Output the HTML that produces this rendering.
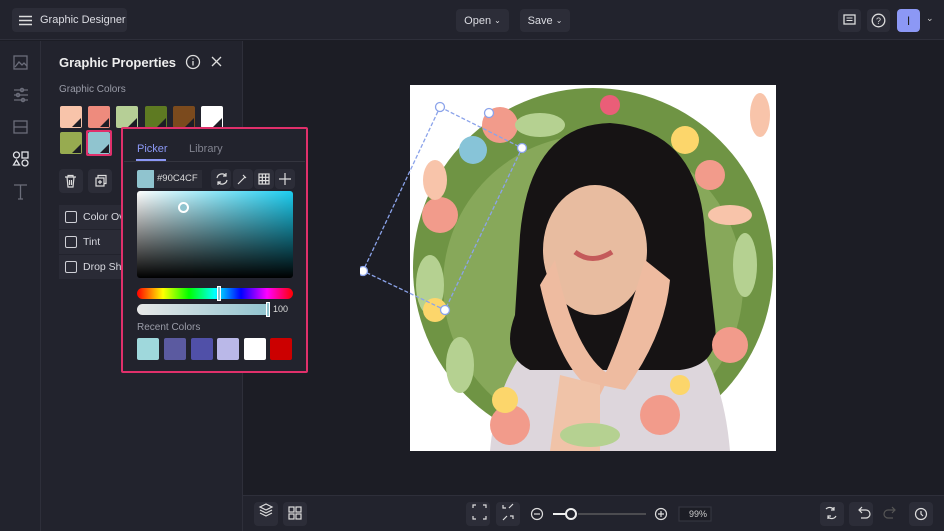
<!DOCTYPE html><html><head><meta charset="utf-8"><style>
*{box-sizing:border-box;margin:0;padding:0;white-space:nowrap}
body{width:944px;height:531px;overflow:hidden;background:#1c1d25;font-family:"Liberation Sans",sans-serif;color:#d8d9e0;position:relative}
.abs{position:absolute}
.top{left:0;top:0;width:944px;height:40px;background:#22232d;border-bottom:1px solid #2e2f3a}
.btn{position:absolute;background:#2c2d38;border-radius:4px;font-size:11px;color:#dcdde3;display:flex;align-items:center;justify-content:center}
.rail{left:0;top:41px;width:41px;height:490px;background:#22232d;border-right:1px solid #2e2f3a}
.panel{left:41px;top:41px;width:202px;height:490px;background:#22232d;border-right:1px solid #2e2f3a}
.sw{position:absolute;width:22px;height:22px;border-radius:2px;overflow:hidden}
.sw:after{content:"";position:absolute;right:1px;bottom:1px;border-left:9px solid transparent;border-bottom:9px solid #1c1d25}
.bot{left:243px;top:495px;width:701px;height:36px;background:#22232d;border-top:1px solid #2e2f3a}
.ib{position:absolute;width:24px;height:24px;background:#2c2d38;border-radius:4px}
.row{position:absolute;left:59px;width:70px;height:24px;background:#2a2b36;font-size:10.5px;display:flex;align-items:center;padding-left:6px;overflow:hidden}
.cb{width:12px;height:12px;border:1.5px solid #cfd0d6;border-radius:2px;margin-right:6px;flex:none}
</style></head><body>
<div class="abs top"></div>
<div class="btn" style="left:12px;top:8px;width:115px;height:24px;justify-content:flex-start;padding-left:7px"><svg width="13" height="11"><path d="M0 1.5h13M0 5.5h13M0 9.5h13" stroke="#ddd" stroke-width="1.4"/></svg><span style="margin-left:8px">Graphic Designer</span></div>
<div class="btn" style="left:456px;top:9px;width:53px;height:23px">Open&nbsp;<span style="font-size:8px">⌄</span></div>
<div class="btn" style="left:520px;top:9px;width:50px;height:23px">Save&nbsp;<span style="font-size:8px">⌄</span></div>
<div class="btn" style="left:838px;top:9px;width:23px;height:23px"><svg width="13" height="13"><rect x="1" y="1" width="11" height="9" fill="none" stroke="#ddd" stroke-width="1.3"/><path d="M3.5 4h6M3.5 6.5h6" stroke="#ddd"/></svg></div>
<div class="btn" style="left:867px;top:9px;width:23px;height:23px"><svg width="15" height="15"><circle cx="7.5" cy="7.5" r="6.3" fill="none" stroke="#ddd" stroke-width="1.3"/><text x="7.5" y="11" font-size="9" fill="#ddd" text-anchor="middle" font-family="Liberation Sans">?</text></svg></div>
<div class="btn" style="left:897px;top:9px;width:23px;height:23px;background:#8c98f5;color:#222;font-size:12px">I</div>
<div class="abs" style="left:926px;top:13px;font-size:9px;color:#ccc">⌄</div>

<div class="abs rail"></div>
<svg class="abs" style="left:12px;top:54px" width="18" height="155" fill="none" stroke="#6b6d7a" stroke-width="1.3">
<rect x="2" y="2" width="13" height="13"/><path d="M3 13l4-5 3 3 2-2 3 3"/>
<path d="M2 36h14M2 41h14M2 46h14"/><circle cx="10" cy="36" r="1.6"/><circle cx="6" cy="41" r="1.6"/><circle cx="11" cy="46" r="1.6"/>
<rect x="2" y="67" width="13" height="12"/><path d="M2 73h13"/>
<g stroke="#e0e1e6"><circle cx="4.5" cy="101" r="3"/><rect x="10" y="98" width="6" height="6"/><path d="M4.5 106l3 5h-6z"/><circle cx="13" cy="109" r="3"/></g>
<path d="M2 131h13M8.5 131v14M6 145h5"/>
</svg>

<div class="abs panel"></div>
<div class="abs" style="left:59px;top:55px;font-size:13px;font-weight:bold;color:#eee">Graphic Properties</div>
<svg class="abs" style="left:185px;top:54px" width="42" height="16" fill="none" stroke="#ddd" stroke-width="1.3"><circle cx="8" cy="8" r="6.5"/><path d="M8 7v4.5M8 4.5v1"/><path d="M27 3l9 9M36 3l-9 9"/></svg>
<div class="abs" style="left:59px;top:84px;font-size:10px;color:#9a9ca8">Graphic Colors</div>
<div class="sw" style="left:60px;top:106px;background:#f8c4aa"></div>
<div class="sw" style="left:88px;top:106px;background:#ee8b7d"></div>
<div class="sw" style="left:116px;top:106px;background:#b6cf96"></div>
<div class="sw" style="left:145px;top:106px;background:#5e7a22"></div>
<div class="sw" style="left:173px;top:106px;background:#7b4a1d"></div>
<div class="sw" style="left:201px;top:106px;background:#fff"></div>
<div class="sw" style="left:60px;top:132px;background:#97ab50"></div>
<div class="abs" style="left:86px;top:130px;width:26px;height:26px;border:2px solid #e0306b;border-radius:2px"></div>
<div class="sw" style="left:88px;top:132px;background:#90c4cf"></div>
<div class="ib" style="left:59px;top:169px"></div><div class="ib" style="left:88px;top:169px"></div>
<svg class="abs" style="left:64px;top:174px" width="60" height="14" fill="none" stroke="#ddd" stroke-width="1.2"><path d="M1 3h11M4 3V1.5h5V3M3 3l1 10h5l1-10M5.5 6v5M7.5 6v5"/><rect x="32" y="4" width="8" height="8"/><path d="M34 4V1.5h8v8h-2M36 6v4M34 8h4"/></svg>
<div class="row" style="top:205px"><div class="cb"></div>Color Ov</div>
<div class="row" style="top:230px"><div class="cb"></div>Tint</div>
<div class="row" style="top:255px"><div class="cb"></div>Drop Sh</div>

<svg class="abs" style="left:360px;top:85px" width="420" height="370">
<rect x="50" y="0" width="366" height="366" fill="#fff"/>
<ellipse cx="233" cy="183" rx="180" ry="180" fill="#6f9444"/>
<ellipse cx="233" cy="200" rx="150" ry="150" fill="#87a85a"/>
<path d="M130 366 Q140 250 230 220 L290 220 Q360 250 370 366Z" fill="#ddd6dc"/>
<path d="M160 150 Q170 40 250 38 Q340 45 345 150 L355 240 Q360 280 320 285 L170 285 Q140 270 155 230Z" fill="#161314"/>
<ellipse cx="235" cy="165" rx="52" ry="65" fill="#e8bca0"/>
<path d="M195 175 Q215 270 250 290 L240 310 Q200 290 180 200Z" fill="#eebba0"/>
<path d="M285 175 Q260 260 240 300 L265 305 Q305 250 310 195Z" fill="#eebba0"/>
<path d="M200 290 L190 366 H240 L240 300Z" fill="#f0c3a8"/>
<path d="M215 167 Q232 180 252 167" stroke="#c45a5a" stroke-width="5" fill="none"/>
<g fill="#f29b8b"><circle cx="80" cy="130" r="18"/><circle cx="370" cy="260" r="18"/><circle cx="140" cy="40" r="18"/><circle cx="150" cy="340" r="20"/><circle cx="350" cy="90" r="15"/><circle cx="300" cy="330" r="20"/></g>
<g fill="#b5d191"><ellipse cx="70" cy="200" rx="14" ry="30"/><ellipse cx="385" cy="180" rx="12" ry="32"/><ellipse cx="230" cy="350" rx="30" ry="12"/><ellipse cx="180" cy="40" rx="25" ry="12"/><ellipse cx="100" cy="280" rx="14" ry="28"/></g>
<g fill="#fcd66b"><circle cx="325" cy="55" r="14"/><circle cx="75" cy="225" r="12"/><circle cx="145" cy="315" r="13"/><circle cx="320" cy="300" r="10"/></g>
<circle cx="250" cy="20" r="10" fill="#ea5e78"/>
<circle cx="113" cy="65" r="14" fill="#87c4d8"/>
<g fill="#f8c4aa"><ellipse cx="370" cy="130" rx="22" ry="10"/><ellipse cx="75" cy="95" rx="12" ry="20"/><ellipse cx="400" cy="30" rx="10" ry="22"/></g>
<g stroke="#8ba3ea" stroke-width="1.3" fill="none" stroke-dasharray="4 2"><path d="M80 22L162 63L85 225L3 186Z"/></g>
<g fill="#fff" stroke="#8ba3ea" stroke-width="1.3"><circle cx="80" cy="22" r="4.5"/><circle cx="129" cy="28" r="4.5"/><circle cx="162" cy="63" r="4.5"/><circle cx="85" cy="225" r="4.5"/><circle cx="3" cy="186" r="4.5"/></g>
</svg>

<div class="abs" style="left:121px;top:127px;width:187px;height:246px;border:2px solid #e0306b;background:#22232d;border-radius:2px"></div>
<div class="abs" style="left:137px;top:143px;font-size:11px;color:#8c98f5">Picker</div>
<div class="abs" style="left:136px;top:159px;width:30px;height:2px;background:#8c98f5"></div>
<div class="abs" style="left:189px;top:143px;font-size:11px;color:#80828e">Library</div>
<div class="abs" style="left:124px;top:161px;width:181px;height:1px;background:#34353f"></div>
<div class="abs" style="left:137px;top:170px;width:18px;height:18px;background:#90c4cf;border-radius:2px"></div>
<div class="abs" style="left:154px;top:170px;width:48px;height:18px;background:#2a2b35;font-size:9.5px;color:#ddd;padding:3px 0 0 3px">#90C4CF</div>
<div class="ib" style="left:211px;top:169px;width:20px;height:20px"></div><div class="ib" style="left:233px;top:169px;width:20px;height:20px"></div><div class="ib" style="left:254px;top:169px;width:20px;height:20px"></div><div class="ib" style="left:275px;top:169px;width:20px;height:20px"></div>
<svg class="abs" style="left:215px;top:172px" width="80" height="14" fill="none" stroke="#ddd" stroke-width="1.2"><path d="M2 6a5 5 0 0 1 9-2M12 8a5 5 0 0 1-9 2M11 1v3H8M3 13v-3h3"/><path d="M23 12l7-7M28 3l3 3"/><rect x="44" y="2" width="10" height="10"/><path d="M47.3 2v10M50.6 2v10M44 5.3h10M44 8.6h10"/><path d="M70 1v12M64 7h12"/></svg>
<div class="abs" style="left:137px;top:191px;width:156px;height:87px;border-radius:3px;background:linear-gradient(to top,#000,rgba(0,0,0,0)),linear-gradient(to right,#fff,#1ccdf0)"></div>
<div class="abs" style="left:178px;top:202px;width:11px;height:11px;border:2px solid #fff;border-radius:50%;background:#90c4cf"></div>
<div class="abs" style="left:137px;top:288px;width:156px;height:11px;border-radius:6px;background:linear-gradient(to right,#f00,#ff0,#0f0,#0ff,#00f,#f0f,#f00)"></div>
<div class="abs" style="left:217px;top:286px;width:4px;height:15px;border:1px solid #fff;background:#90c4cf"></div>
<div class="abs" style="left:137px;top:304px;width:133px;height:11px;border-radius:6px 0 0 6px;background:linear-gradient(to right,#e8e8e8,#90c4cf)"></div>
<div class="abs" style="left:266px;top:302px;width:4px;height:15px;border:1px solid #fff;background:#90c4cf"></div>
<div class="abs" style="left:273px;top:304px;font-size:9px;color:#ddd">100</div>
<div class="abs" style="left:137px;top:322px;font-size:10px;color:#9a9ca8">Recent Colors</div>
<div class="abs" style="left:137px;top:338px;width:22px;height:22px;background:#9fd8dc;border-radius:2px"></div>
<div class="abs" style="left:164px;top:338px;width:22px;height:22px;background:#5b5aa0;border-radius:2px"></div>
<div class="abs" style="left:191px;top:338px;width:22px;height:22px;background:#5050a8;border-radius:2px"></div>
<div class="abs" style="left:217px;top:338px;width:22px;height:22px;background:#bab8e8;border-radius:2px"></div>
<div class="abs" style="left:244px;top:338px;width:22px;height:22px;background:#fff;border-radius:2px"></div>
<div class="abs" style="left:270px;top:338px;width:22px;height:22px;background:#cc0000;border-radius:2px"></div>

<div class="abs bot"></div>
<div class="ib" style="left:254px;top:502px"></div><div class="ib" style="left:283px;top:502px"></div>
<div class="ib" style="left:466px;top:502px"></div><div class="ib" style="left:496px;top:502px"></div>
<div class="ib" style="left:820px;top:502px"></div><div class="ib" style="left:849px;top:502px"></div><div class="ib" style="left:909px;top:502px"></div>
<svg class="abs" style="left:243px;top:495px" width="701" height="36" fill="none" stroke="#ddd" stroke-width="1.2">
<path d="M23 9l6 3-6 3-6-3zM17 15l6 3 6-3M17 18l6 3 6-3"/>
<rect x="46" y="12" width="5" height="5"/><rect x="53" y="12" width="5" height="5"/><rect x="46" y="19" width="5" height="5"/><rect x="53" y="19" width="5" height="5"/>
<path d="M230 13v-3h3M240 10h3v3M243 21v3h-3M233 24h-3v-3"/>
<path d="M260 10v3h3M266 13l4-4M270 24v-3h-3M264 21l-4 4"/>
<circle cx="294" cy="19" r="5.5"/><path d="M291 19h6"/>
<path d="M310 19h17" stroke="#eee" stroke-width="2"/><path d="M335 19h68" stroke="#666"/><circle cx="328" cy="19" r="5" stroke="#eee" stroke-width="2" fill="#22232d"/>
<circle cx="418" cy="19" r="5.5"/><path d="M415 19h6M418 16v6"/>
<rect x="436" y="12" width="32" height="14" fill="#1c1d25" stroke="#34353f"/>
<path d="M583 14a5 5 0 0 1 8 1M593 21a5 5 0 0 1-8 1M591 12v3h-3M585 24v-3h3"/>
<path d="M616 15h7a4 4 0 0 1 0 8h-5M619 12l-3 3 3 3"/>
<path d="M652 15h-7a4 4 0 0 0 0 8h5M649 12l3 3-3 3" stroke="#555"/>
<circle cx="678" cy="19" r="5.5"/><path d="M678 16v3l2 2"/>
</svg>
<div class="abs" style="left:689px;top:509px;font-size:9px;color:#ccc">99%</div>
</body></html>
